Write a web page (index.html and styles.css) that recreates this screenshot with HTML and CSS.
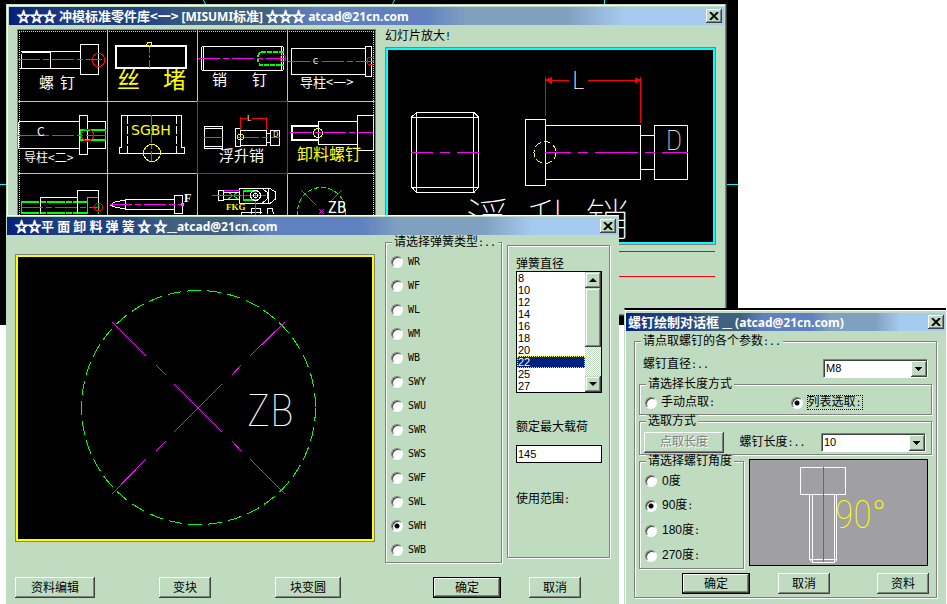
FILE: index.html
```html
<!DOCTYPE html>
<html lang="zh-CN">
<head>
    <meta charset="UTF-8">
    <meta name="viewport" content="width=device-width, initial-scale=1.0">
    <title>冲模标准零件库</title>
    <link rel="stylesheet" href="styles.css">
</head>
<body>
    <div class="desktop">
        <svg class="cad" width="738" height="325" viewBox="0 0 738 325">
            <rect width="738" height="325" fill="#000"/>
            <g class="cyan">
                <path d="M203.500 0L206 5M394.500 0L392 5M604.500 0V5M0 184.500H7M726 184.500H738"/>
            </g>
        </svg>

        <!-- parts library -->
        <section class="window library">
            <header class="title wide">
                <h1><span class="star">☆☆☆</span> 冲模标准零件库&lt;一&gt;<span class="latin"> [MISUMI</span>标准<span class="latin">]</span> <span class="star">☆☆☆</span><span class="latin"> atcad@21cn.com</span></h1>
                <button class="close" aria-label="关闭"><svg width="10" height="8" viewBox="0 0 10 8"><path d="M1 0L9 8M9 0L1 8"/></svg></button>
            </header>
            <div class="library-body">
                <div class="slides">
                    <div class="slide"><svg viewBox="18 30 89 71">
                        <g class="white"><path d="M20.500 51.500H80.500V68.500H18.500M21.500 53.500V68M21.500 52.500H50.500V68.500"/><rect x="80.500" y="44.500" width="18" height="30"/></g>
                        <path class="magenta long" d="M18 59.500H102"/>
                        <circle class="red" cx="98.500" cy="60" r="6.500"/>
                        <text x="39" y="88" font-size="15">螺</text><text x="60" y="88" font-size="15">钉</text>
                    </svg></div>
                    <div class="slide"><svg viewBox="108 30 89 71">
                        <rect class="white thick" x="116" y="46" width="70" height="22"/>
                        <path class="magenta" stroke-dasharray="8 2 3 2" d="M149.500 45V69"/>
                        <circle class="yellow" cx="149.500" cy="44.500" r="2.500"/>
                        <g class="y"><text x="117" y="88" font-size="23">丝</text><text x="163" y="88" font-size="23">堵</text></g>
                    </svg></div>
                    <div class="slide"><svg viewBox="198 30 89 71">
                        <g class="white"><rect x="201.500" y="46.500" width="82" height="24" rx="2"/><path d="M203.500 47V70M281.500 47V70"/></g>
                        <path class="green thick" stroke-dasharray="5 1" d="M284 52H260L258 56V61L260 65H284"/>
                        <path class="magenta long" d="M198 58.500H286"/>
                        <circle class="red" cx="283" cy="58.500" r="3"/>
                        <text x="212" y="85" font-size="15">销</text><text x="252" y="85" font-size="15">钉</text>
                    </svg></div>
                    <div class="slide"><svg viewBox="288 30 86 71">
                        <g class="white"><rect x="291.500" y="48.500" width="74" height="26"/><rect x="365.500" y="46.500" width="6" height="30"/></g>
                        <path class="magenta long" d="M288 61.500H374"/>
                        <circle class="red" cx="371" cy="61" r="4"/>
                        <text x="313" y="64" font-size="8">C</text>
                        <text x="300" y="87" font-size="13">导柱&lt;一&gt;</text>
                    </svg></div>
                    <div class="slide"><svg viewBox="18 102 89 71">
                        <g class="white"><path d="M18.500 121.500H79M18.500 121.500V148.500H79M88 121.500H105.500V148.500H88"/><rect x="79.500" y="115.500" width="8" height="39"/></g>
                        <path class="green thick" d="M80 130H106M80 140H106"/>
                        <path class="green" d="M80.500 130V140M105.500 130V140"/>
                        <path class="magenta long" d="M18 135.500H106"/>
                        <circle class="red" cx="87.500" cy="135" r="6"/>
                        <text x="37" y="136" font-size="12">C</text>
                        <text x="24" y="162" font-size="12">导柱&lt;二&gt;</text>
                    </svg></div>
                    <div class="slide"><svg viewBox="108 102 89 71">
                        <path class="white" d="M121.500 147V115.500H181.500V147M119.500 147.500H122M181 147.500H184.500V153.500H119.500V147"/>
                        <path class="white" stroke-dasharray="8 2" d="M127.500 116V153M176.500 116V153"/>
                        <path class="magenta" stroke-dasharray="10 2 4 2" d="M151.500 115V162"/>
                        <circle class="yellow" cx="152" cy="153" r="8.500"/>
                        <text class="y broad" x="131" y="135" font-size="14">SGBH</text>
                    </svg></div>
                    <div class="slide selected"><svg viewBox="198 102 89 71">
                        <g class="white"><rect x="204.500" y="126.500" width="18" height="22" rx="1"/><path d="M205 128.500H222M205 146.500H222"/><rect x="235.500" y="128.500" width="5" height="18"/><rect x="240.500" y="130.500" width="26" height="15"/><path d="M266 133.500H270M266 142.500H270"/><rect x="270.500" y="130.500" width="9" height="15"/></g>
                        <path class="red" d="M240.500 117V130M266.500 117V130M241 118.500H247M252 118.500H266"/>
                        <path class="magenta long" d="M204 137.500H223M237 137.500H280"/>
                        <circle class="yellow" cx="240.500" cy="137" r="3"/>
                        <text x="247" y="121" font-size="8">L</text>
                        <text x="273" y="137" font-size="8">D</text>
                        <text x="219" y="161" font-size="15">浮升销</text>
                    </svg></div>
                    <div class="slide"><svg viewBox="288 102 86 71">
                        <path class="white thick" d="M318 126H292V140H318"/>
                        <g class="white"><rect x="318.500" y="121.500" width="39" height="23"/><rect x="357.500" y="115.500" width="16" height="35"/></g>
                        <path class="magenta long" d="M290 132.500H374"/>
                        <circle class="yellow" cx="318" cy="133" r="4.500"/>
                        <text class="y" x="297" y="160" font-size="16">卸料螺钉</text>
                    </svg></div>
                    <div class="slide"><svg viewBox="18 174 89 71">
                        <path class="green thick" stroke-dasharray="18 1 6 1" d="M21 202H88M21 213H88"/>
                        <path class="green" d="M21.500 202V213M87.500 213V197.500H98.500V214"/>
                        <path class="white" d="M40.500 214V197.500H77.500M77.500 214V190.500H98.500V204"/>
                        <path class="magenta long" d="M21 207.500H98"/>
                        <circle class="red" cx="98.500" cy="207" r="4"/>
                    </svg></div>
                    <div class="slide"><svg viewBox="108 174 89 71">
                        <path class="white" d="M174 199.500H125.500V209H174M125 200L115 202L110 205L115 207L125 209"/>
                        <rect class="white" x="174.500" y="195.500" width="8" height="18"/>
                        <path class="magenta long" d="M110 204.500H183"/>
                        <circle class="cyan" cx="182.500" cy="204.500" r="1"/>
                        <text class="serif" x="184" y="202" font-size="12">F</text>
                    </svg></div>
                    <div class="slide"><svg viewBox="198 174 89 71">
                        <path class="green thick" d="M243 191H257M243 200H257"/>
                        <path class="green" d="M228 192L238 199M228 199L238 192M243.500 191V201"/>
                        <path class="white" d="M218.500 190.500H223.500V200.500H218.500ZM223 192.500H240M223 199.500H240M239.500 188.500H270L275.500 192V199L270 203.500H239.500ZM262 188.500L267 192V199L262 203.500M268.500 189V203M251.500 214V208.500H260V214M241.500 215V212H262M267.500 214V208.500H272L273.500 214"/>
                        <path class="magenta" d="M212 195.500H266M224 190.500H240M255.500 190V215"/>
                        <circle class="white" cx="255.500" cy="195.500" r="5"/><circle class="white" cx="255.500" cy="195.500" r="2"/>
                        <text class="y serif" x="226" y="210" font-size="9">FKG</text>
                    </svg></div>
                    <div class="slide"><svg viewBox="288 174 86 71">
                        <circle class="green" stroke-dasharray="5 2" cx="321.500" cy="211.500" r="24"/>
                        <path class="magenta" d="M301 190L316 205M342 190L331 201M319 209L324 214M324 209L319 214"/>
                        <text class="narrow" x="328" y="213" font-size="17">ZB</text>
                    </svg></div>
                </div>
                <div class="zoomed">
                    <p>幻灯片放大<span class="mono">!</span></p>
                    <div class="preview">
                        <svg width="325" height="192" viewBox="388 50 325 192">
                            <g class="white">
                                <path d="M416.500 112.500H474L478.500 117V187L474 192.500H416.500L411.500 187V117ZM411 117.500H478M411 187.500H478M416.500 113V192M473.500 113V192"/>
                                <rect x="525.500" y="119.500" width="20" height="66"/><rect x="545.500" y="125.500" width="95" height="54"/>
                                <path d="M641 135.500H654M641 169.500H654"/><rect x="654.500" y="125.500" width="33" height="54"/>
                            </g>
                            <g class="red"><path d="M545.500 77V116M640.500 77V123M546 80.500H569M588 80.500H640"/><path fill="#f00" d="M546 80L551 78V83ZM640 80L635 78V83Z"/></g>
                            <path class="magenta" d="M411 152.500H433M440 152.500H450M457 152.500H479M545 152.500H571M578 152.500H588M595 152.500H638M645 152.500H655M662 152.500H688"/>
                            <circle class="yellow" stroke-dasharray="7 3" cx="545" cy="152.500" r="11"/>
                            <text class="thin" x="572" y="89" font-size="24">L</text>
                            <text class="thin narrow" x="666" y="150" font-size="28">D</text>
                            <g class="thin"><text x="466" y="236" font-size="44">浮</text><text x="527" y="236" font-size="44">升</text><text x="585" y="236" font-size="44">销</text></g>
                        </svg>
                    </div>
                    <hr>
                    <hr>
                </div>
            </div>
        </section>

        <!-- spring dialog -->
        <section class="window spring">
            <header class="title wide">
                <h1><span class="star">☆☆</span>平<span class="latin"> </span>面<span class="latin"> </span>卸<span class="latin"> </span>料<span class="latin"> </span>弹<span class="latin"> </span>簧<span class="latin"> </span><span class="star">☆</span><span class="latin"> </span><span class="star">☆</span><span class="latin">__atcad@21cn.com</span></h1>
                <button class="close" aria-label="关闭"><svg width="10" height="8" viewBox="0 0 10 8"><path d="M1 0L9 8M9 0L1 8"/></svg></button>
            </header>
            <form class="spring-body">
                <div class="columns">
                    <div class="drawing">
                        <svg width="354" height="282" viewBox="18 257 354 282">
                            <circle class="green" stroke-dasharray="14 6" cx="198.500" cy="407.500" r="117"/>
                            <path class="magenta" d="M112 322L146 356M156 365L166 375M174 384L222 432M232 441L241 451M250 459L285 494M285 322L250 356M241 365L232 375M222 384L174 432M166 441L156 451M146 459L112 494"/>
                            <text class="thin narrow" x="247" y="426" font-size="44">ZB</text>
                        </svg>
                    </div>
                    <fieldset class="types">
                        <legend>请选择弹簧类型<span class="mono">:..</span></legend>
                        <label><input type="radio" name="type"><span class="mono">WR</span></label>
                        <label><input type="radio" name="type"><span class="mono">WF</span></label>
                        <label><input type="radio" name="type"><span class="mono">WL</span></label>
                        <label><input type="radio" name="type"><span class="mono">WM</span></label>
                        <label><input type="radio" name="type"><span class="mono">WB</span></label>
                        <label><input type="radio" name="type"><span class="mono">SWY</span></label>
                        <label><input type="radio" name="type"><span class="mono">SWU</span></label>
                        <label><input type="radio" name="type"><span class="mono">SWR</span></label>
                        <label><input type="radio" name="type"><span class="mono">SWS</span></label>
                        <label><input type="radio" name="type"><span class="mono">SWF</span></label>
                        <label><input type="radio" name="type"><span class="mono">SWL</span></label>
                        <label><input type="radio" name="type" checked><span class="mono">SWH</span></label>
                        <label><input type="radio" name="type"><span class="mono">SWB</span></label>
                    </fieldset>
                    <div class="params">
                        <label for="diameter">弹簧直径</label>
                        <div class="list">
                            <select id="diameter" size="10">
                                <option>8</option>
                                <option>10</option>
                                <option>12</option>
                                <option>14</option>
                                <option>16</option>
                                <option>18</option>
                                <option>20</option>
                                <option selected>22</option>
                                <option>25</option>
                                <option>27</option>
                                <option>30</option>
                                <option>35</option>
                                <option>40</option>
                                <option>50</option>
                                <option>60</option>
                            </select>
                            <div class="scrollbar" aria-hidden="true">
                                <div class="arrow"><svg width="8" height="4"><path d="M0 4H8L4 0Z"/></svg></div>
                                <div class="thumb"></div>
                                <div class="arrow"><svg width="8" height="4"><path d="M0 0H8L4 4Z"/></svg></div>
                            </div>
                        </div>
                        <label for="load">额定最大载荷</label>
                        <input type="text" id="load" value="145">
                        <p>使用范围<span class="mono">:</span></p>
                    </div>
                </div>
                <div class="buttons">
                    <button type="button" class="btn w80">资料编辑</button>
                    <button type="button" class="btn">变块</button>
                    <button type="button" class="btn w66">块变圆</button>
                    <button type="button" class="btn default">确定</button>
                    <button type="button" class="btn">取消</button>
                </div>
            </form>
        </section>

        <!-- screw dialog -->
        <section class="window screw">
            <header class="title">
                <h1>螺钉绘制对话框<span class="latin"> __ (atcad@21cn.com)</span></h1>
                <button class="close" aria-label="关闭"><svg width="10" height="8" viewBox="0 0 10 8"><path d="M1 0L9 8M9 0L1 8"/></svg></button>
            </header>
            <form class="screw-body">
                <fieldset class="all">
                    <legend>请点取螺钉的各个参数<span class="mono">:..</span></legend>
                    <div class="row">
                        <label for="screw-d">螺钉直径<span class="mono">:..</span></label>
                        <select class="combo" id="screw-d"><option>M8</option></select>
                    </div>
                    <fieldset>
                        <legend>请选择长度方式</legend>
                        <div class="modes">
                            <label><input type="radio" name="mode"><span>手动点取<span class="mono">:</span></span></label>
                            <label><input type="radio" name="mode" checked><span class="focused">列表选取<span class="mono">:</span></span></label>
                        </div>
                    </fieldset>
                    <fieldset>
                        <legend>选取方式</legend>
                        <div class="pick">
                            <button type="button" class="btn w80" disabled>点取长度</button>
                            <label for="screw-l">螺钉长度<span class="mono">:..</span></label>
                            <select class="combo" id="screw-l"><option>10</option></select>
                        </div>
                    </fieldset>
                    <div class="lower">
                        <fieldset class="angles">
                            <legend>请选择螺钉角度</legend>
                            <label><input type="radio" name="angle"><span>0度</span></label>
                            <label><input type="radio" name="angle" checked><span>90度<span class="mono">:</span></span></label>
                            <label><input type="radio" name="angle"><span>180度<span class="mono">:</span></span></label>
                            <label><input type="radio" name="angle"><span>270度<span class="mono">:</span></span></label>
                        </fieldset>
                        <div class="screw-view">
                            <svg width="177" height="105" viewBox="751 460 177 105">
                                <g class="white"><rect x="801.500" y="467.500" width="45" height="27"/><path d="M810.500 494V559.500H837.500V494M813.500 494V562.500M835.500 494V562.500M811 560L814 562.500H835L838 560"/></g>
                                <path class="magenta" d="M824.500 467V562"/>
                                <text class="y thin narrow" x="836" y="528" font-size="38">90°</text>
                            </svg>
                        </div>
                    </div>
                    <div class="actions">
                        <button type="button" class="btn default">确定</button>
                        <button type="button" class="btn">取消</button>
                        <button type="button" class="btn">资料</button>
                    </div>
                </fieldset>
            </form>
        </section>
    </div>
</body>
</html>
```
FILE: styles.css
```css
* {
    box-sizing: border-box;
}

body {
    margin: 0;
    background-color: #fff;
    color: #000;
    font-family: "Liberation Sans", "Noto Sans CJK SC", sans-serif;
    font-size: 12px;
    line-height: 12px;
}

h1, p, fieldset, legend, hr {
    margin: 0;
    padding: 0;
    border: none;
    font-size: 12px;
}

button, input, select {
    margin: 0;
    font-family: inherit;
    font-size: 12px;
    color: #000;
}

.mono {
    font-family: "DejaVu Sans Mono", monospace;
    font-size: 10px;
}

.desktop {
    position: relative;
    height: 100vh;
    overflow: hidden;
}

.cad {
    display: block;
}

/* windows */
.window {
    position: absolute;
    background-color: #c0dcc0;
}

.library {
    left: 6px;
    top: 4px;
    width: 721px;
    height: 312px;
    padding: 3px;
    box-shadow: inset -1px -1px #404040, inset -2px -2px #808080, inset 1px 1px #c0dcc0, inset 2px 2px #fff;
}

.spring {
    left: 6px;
    top: 215px;
    width: 613px;
    padding: 2px 1px 6px;
    box-shadow: inset 0 1px #fff;
}

.screw {
    left: 624px;
    top: 308px;
    width: 322px;
    padding: 3px 1px 6px;
    border-top: 2px solid #000;
    border-left: 1px solid #c0dcc0;
    box-shadow: inset 1px 1px #fff;
}

.title {
    display: flex;
    align-items: center;
    justify-content: space-between;
    height: 18px;
    padding: 0 1px 0 2px;
    background: linear-gradient(to right, #08207c 0%, #204080 9%, #204080 18%, #406080 27%, #406080 36%, #6080c0 43%, #6080c0 58%, #80a0c0 64%, #80a0c0 78%, #a6caf0 86%);
}

.title.wide {
    padding-left: 8px;
    padding-right: 2px;
}

.title h1 {
    color: #fff;
    font-family: "Noto Sans CJK SC", sans-serif;
    font-size: 13px;
    font-weight: bold;
    line-height: 18px;
    white-space: pre;
}

.title .latin {
    font-family: "Noto Sans", sans-serif;
    font-size: 12px;
}

.title .star {
    -webkit-text-stroke: 1px #fff;
}

.close {
    display: flex;
    align-items: center;
    justify-content: center;
    width: 16px;
    height: 14px;
    padding: 0;
    border: none;
    background-color: #c0dcc0;
    box-shadow: inset -1px -1px #404040, inset 1px 1px #fff, inset -2px -2px #808080;
}

.close path {
    stroke: #000;
    stroke-width: 2;
}

/* line drawings */
.slides svg, .preview svg, .drawing svg, .screw-view svg {
    display: block;
    fill: none;
    stroke: none;
    shape-rendering: crispEdges;
}

svg text {
    fill: #fff;
    font-family: "Noto Sans CJK SC", sans-serif;
}

svg .y, svg .y text {
    fill: #ff0;
}

svg .thin {
    font-weight: 100;
}

svg .narrow {
    font-family: "Roboto Condensed", "Open Sans Condensed", "Noto Sans CJK SC", sans-serif;
}

svg .broad {
    font-family: "DejaVu Sans", sans-serif;
}

svg .serif {
    font-family: "Liberation Serif", serif;
    font-weight: bold;
}

.white {
    stroke: #fff;
}

.red {
    stroke: #f00;
}

.green {
    stroke: #0f0;
}

.yellow {
    stroke: #ff0;
}

.cyan {
    stroke: #0ff;
}

.magenta {
    stroke: #f0f;
}

.thick {
    stroke-width: 2;
}

.long {
    stroke-dasharray: 22 3 6 3;
}

/* library */
.library-body {
    display: flex;
    gap: 9px;
    padding: 4px 8px;
}

.slides {
    position: relative;
    display: grid;
    grid-template-columns: 90px 90px 90px 87px;
    grid-auto-rows: 72px;
    height: 262px;
    border: 1px solid #808080;
    background-color: #000;
}

.slides::after {
    content: "";
    position: absolute;
    inset: 1px;
    border: 1px dotted #c0dcc0;
}

.slide {
    border-right: 1px solid #c0c0c0;
    border-bottom: 1px solid #c0c0c0;
}

.slide:nth-child(4n) {
    border-right-color: #000;
}

.slide.selected {
    border-color: #f00;
    box-shadow: -1px -1px #f00, 0 -1px #f00, -1px 0 #f00;
}

.zoomed {
    flex: 1;
}

.zoomed p {
    line-height: 14px;
}

.preview {
    width: 331px;
    margin-top: 3px;
    margin-bottom: 6px;
    border: 1px solid #808080;
    background-color: #000;
    box-shadow: inset 0 0 0 2px #0ff;
    padding: 2px;
}

.zoomed hr {
    width: 330px;
    margin-bottom: 24px;
    border-top: 1px solid #f00;
}

/* fieldsets */
fieldset {
    min-width: 0;
    border: 1px solid #808080;
    box-shadow: 1px 1px #fff, inset 1px 1px #fff;
}

legend {
    margin-left: 6px;
    padding: 0 2px;
    line-height: 13px;
    background-color: #c0dcc0;
    white-space: nowrap;
}

/* controls */
input[type="radio"] {
    appearance: none;
    flex: none;
    width: 12px;
    height: 12px;
    border: 1px solid;
    border-color: #808080 #fff #fff #808080;
    border-radius: 50%;
    background-color: #fff;
    box-shadow: inset 1px 1px #404040;
}

input[type="radio"]:checked {
    background-image: radial-gradient(circle, #000 2px, #fff 3px);
}

.btn {
    width: 52px;
    height: 21px;
    padding: 0;
    border: none;
    background-color: #c0dcc0;
    box-shadow: inset -1px -1px #404040, inset 1px 1px #fff, inset -2px -2px #808080;
    line-height: 18px;
}

.btn.w66 {
    width: 66px;
}

.btn.w80 {
    width: 80px;
}

.btn.default {
    width: 68px;
    border: 1px solid #000;
    line-height: 16px;
}

.btn:disabled {
    color: #808080;
    text-shadow: 1px 1px #fff;
}

.combo {
    appearance: none;
    width: 105px;
    height: 19px;
    padding: 0 2px;
    border: 1px solid;
    border-color: #808080 #fff #fff #808080;
    border-radius: 0;
    box-shadow: inset 1px 1px #404040;
    font-size: 11px;
    background: #fff url("data:image/svg+xml,%3Csvg xmlns='http://www.w3.org/2000/svg' width='16' height='16' shape-rendering='crispEdges'%3E%3Crect width='16' height='16' fill='%23404040'/%3E%3Crect width='15' height='15' fill='%23fff'/%3E%3Cpath d='M1 14H14V1H15V15H1Z' fill='%23808080'/%3E%3Crect x='1' y='1' width='13' height='13' fill='%23c0dcc0'/%3E%3Cpath d='M4 6H11L7.500 10Z'/%3E%3C/svg%3E") no-repeat right 0 top 1px;
}

/* spring dialog */
.spring-body {
    padding: 1px 8px 0;
}

.columns {
    display: flex;
    align-items: flex-start;
}

.drawing {
    margin-top: 18px;
    padding: 2px;
    border: 1px solid #808080;
    background-color: #000;
    box-shadow: inset 0 0 0 2px #ff0;
}

.types {
    width: 117px;
    margin-left: 10px;
    padding-top: 1px;
}

.types label, .angles label {
    display: flex;
    align-items: center;
    gap: 5px;
    height: 24px;
    padding-left: 5px;
}

.params {
    display: flex;
    flex-direction: column;
    width: 103px;
    height: 313px;
    margin-top: 9px;
    margin-left: 5px;
    padding: 12px 8px;
    border: 1px solid #808080;
    box-shadow: 1px 1px #fff, inset 1px 1px #fff;
}

.list {
    display: flex;
    flex: none;
    width: 86px;
    height: 122px;
    margin-top: 1px;
    margin-bottom: 28px;
    border: 1px solid #000;
}

.list select {
    flex: 1;
    min-width: 0;
    height: 120px;
    padding: 0;
    border: none;
    border-radius: 0;
    background-color: #fff;
    font-size: 11px;
    scrollbar-width: none;
}

.list option {
    height: 12px;
    min-height: 12px;
    padding: 0 1px;
    line-height: 12px;
}

.list option:checked {
    background: linear-gradient(#002080, #002080);
    color: #fff;
    outline: 1px dotted #ff0;
    outline-offset: -1px;
}

.scrollbar {
    display: flex;
    flex-direction: column;
    width: 16px;
    background: repeating-conic-gradient(#c0dcc0 0% 25%, #fff 0% 50%) 0 0 / 2px 2px;
}

.arrow, .thumb {
    background-color: #c0dcc0;
    box-shadow: inset -1px -1px #404040, inset 1px 1px #c0dcc0, inset -2px -2px #808080, inset 2px 2px #fff;
}

.arrow {
    display: flex;
    align-items: center;
    justify-content: center;
    height: 16px;
}

.arrow:last-child {
    margin-top: auto;
}

.thumb {
    height: 59px;
}

.params input {
    width: 86px;
    height: 18px;
    margin-top: 12px;
    margin-bottom: 30px;
    padding: 0 1px;
    border: 1px solid #000;
    font-size: 11px;
}

.buttons {
    display: flex;
    gap: 64px;
    margin-top: 14px;
}

.buttons .default {
    margin-left: 28px;
    margin-right: -36px;
}

/* screw dialog */
.screw-body {
    padding: 4px 8px 0;
}

.all {
    padding: 0 4px 3px;
}

.all > legend {
    margin-left: 2px;
}

.row {
    display: flex;
    align-items: center;
    justify-content: space-between;
    height: 30px;
    padding: 10px 4px 0;
}

.row label {
    margin-top: -8px;
}

.modes {
    display: grid;
    grid-template-columns: 1fr 1fr;
    height: 23px;
}

.modes label {
    display: flex;
    align-items: center;
    gap: 4px;
    padding-left: 5px;
}

.focused {
    padding: 1px;
    outline: 1px dotted #000;
    outline-offset: -1px;
}

.pick {
    display: flex;
    align-items: center;
    justify-content: space-between;
    height: 26px;
    padding: 2px 5px 0 4px;
}

.lower {
    display: flex;
    gap: 5px;
}

.angles {
    width: 105px;
}

.angles label {
    height: 25px;
}

.screw-view {
    align-self: flex-start;
    margin-top: 4px;
    border: 1px solid #000;
    background-color: #a0a0a4;
}

.actions {
    display: flex;
    gap: 28px;
    margin-top: 4px;
    padding-left: 43px;
}

.actions .btn:last-child {
    margin-left: 19px;
}
```
